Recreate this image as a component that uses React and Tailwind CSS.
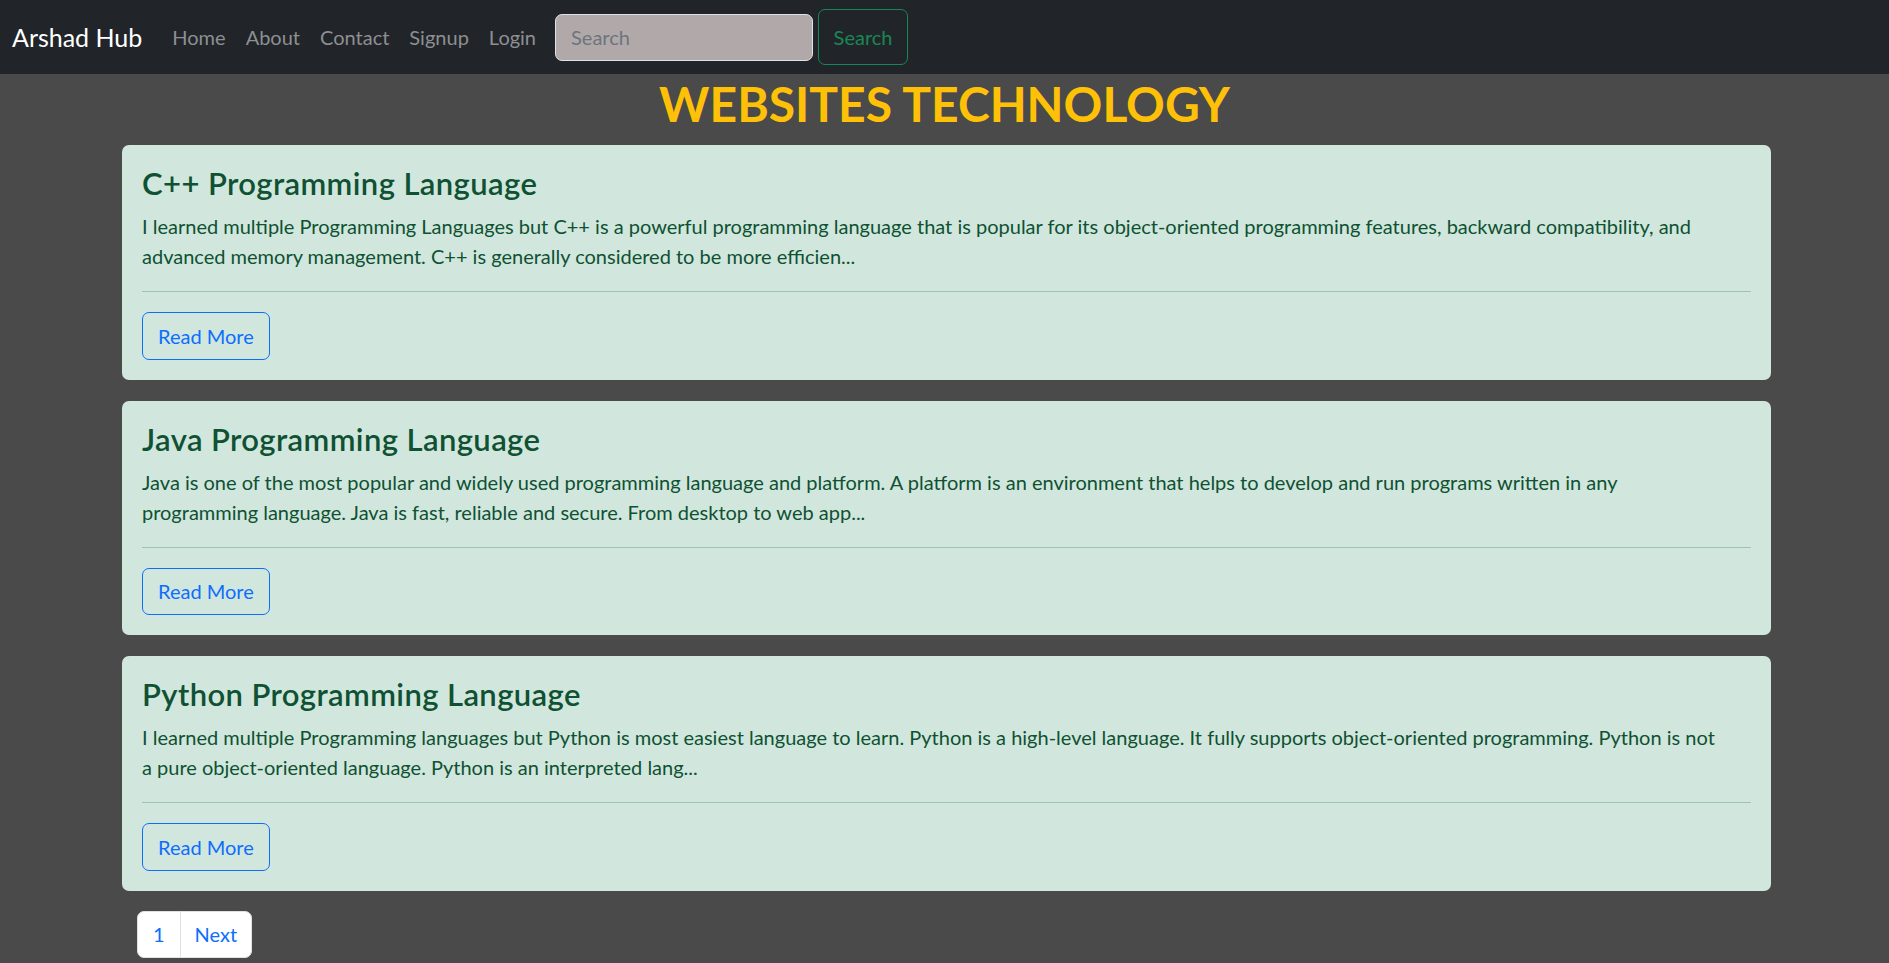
import React from 'react';

const posts = [
    {
        title: 'C++ Programming Language',
        lines: [
            'I learned multiple Programming Languages but C++ is a powerful programming language that is popular for its object-oriented programming features, backward compatibility, and',
            'advanced memory management. C++ is generally considered to be more efficien...',
        ],
    },
    {
        title: 'Java Programming Language',
        lines: [
            'Java is one of the most popular and widely used programming language and platform. A platform is an environment that helps to develop and run programs written in any',
            'programming language. Java is fast, reliable and secure. From desktop to web app...',
        ],
    },
    {
        title: 'Python Programming Language',
        lines: [
            'I learned multiple Programming languages but Python is most easiest language to learn. Python is a high-level language. It fully supports object-oriented programming. Python is not',
            'a pure object-oriented language. Python is an interpreted lang...',
        ],
    },
];

const navLinks = ['Home', 'About', 'Contact', 'Signup', 'Login'];

const PostCard = ({ title, lines }) => (
    <div className="rounded-[7px] bg-[#d1e7dd] p-[20px] text-[#0f5132]">
        <h4 className="text-[31px] font-semibold tracking-[0.4px] leading-[36px] mb-[10px]">{title}</h4>
        <p className="text-[20px] leading-[30px] mb-[20px] whitespace-nowrap">
            {lines[0]}
            <br />
            {lines[1]}
        </p>
        <hr className="border-0 border-t border-[#a1c1b2] mb-[20px]" />
        <button className="h-[47.5px] px-[15px] rounded-[7px] border border-[#0d6efd] text-[#0d6efd] text-[20px] leading-[30px]">
            Read More
        </button>
    </div>
);

export default function App() {
    return (
        <div className="min-h-screen bg-[#4a4a4a] font-['Lato',sans-serif]">
            {/* Navbar */}
            <nav className="flex items-center h-[74px] bg-[#212529] pl-[12px]">
                <span className="text-[25px] text-white mr-[20px] leading-[37px]">Arshad Hub</span>
                <ul className="flex items-center">
                    {navLinks.map(link => (
                        <li key={link} className="px-[10px] text-[20px] text-[#8d8f92] leading-[30px]">{link}</li>
                    ))}
                </ul>
                <form className="flex items-center ml-[9px]" onSubmit={e => e.preventDefault()}>
                    <input
                        type="search"
                        placeholder="Search"
                        className="w-[258px] h-[47px] rounded-[7px] border border-[#dee2e6] bg-[#b1a9a9] px-[15px] text-[20px] outline-none placeholder:text-[#6c757d]"
                    />
                    <button className="ml-[5px] w-[90px] h-[56px] rounded-[7px] border border-[#198754] text-[#198754] text-[20px]">
                        Search
                    </button>
                </form>
            </nav>

            {/* Main */}
            <h1 className="h-[60px] mb-[11px] text-center text-[48px] font-bold leading-[60px] text-[#ffc107]">
                WEBSITES TECHNOLOGY
            </h1>

            <div className="w-[1649px] ml-[122px] flex flex-col gap-[21px]">
                {posts.map(p => (
                    <PostCard key={p.title} {...p} />
                ))}
            </div>

            {/* Pagination */}
            <div className="w-[1649px] ml-[122px] pt-[20px] pb-[10px]">
                <ul className="flex ml-[15px] text-[20px] leading-[30px] text-[#0d6efd]">
                    <li className="px-[15px] py-[7.5px] bg-white border border-[#dee2e6] rounded-l-[7px]">1</li>
                    <li className="px-[14px] py-[7.5px] bg-white border border-[#dee2e6] rounded-r-[7px] -ml-px">Next</li>
                </ul>
            </div>
        </div>
    );
}
